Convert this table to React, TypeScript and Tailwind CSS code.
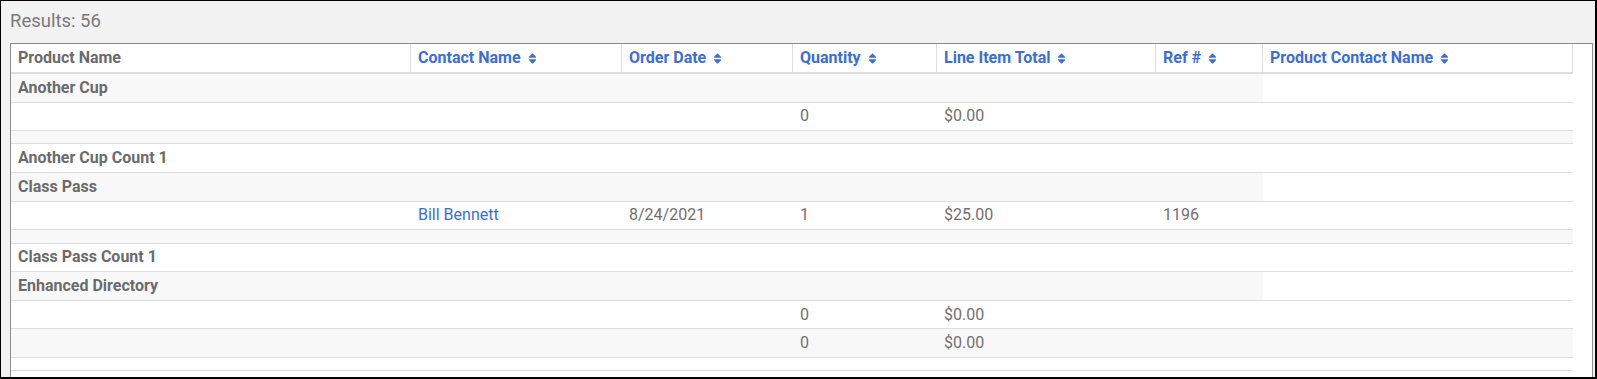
import { FaSort } from "react-icons/fa";

type Col = { label: string; width: string; sortable: boolean };

const columns: Col[] = [
  { label: "Product Name", width: "w-[400px]", sortable: false },
  { label: "Contact Name", width: "w-[211px]", sortable: true },
  { label: "Order Date", width: "w-[171px]", sortable: true },
  { label: "Quantity", width: "w-[144px]", sortable: true },
  { label: "Line Item Total", width: "w-[219px]", sortable: true },
  { label: "Ref #", width: "w-[107px]", sortable: true },
  { label: "Product Contact Name", width: "w-[310px]", sortable: true },
];

type Row =
  | { kind: "group"; label: string }
  | { kind: "count"; label: string }
  | { kind: "gap"; shaded: boolean }
  | {
      kind: "item";
      shaded: boolean;
      contact?: string;
      date?: string;
      qty: string;
      total: string;
      ref?: string;
    };

const rows: Row[] = [
  { kind: "group", label: "Another Cup" },
  { kind: "item", shaded: false, qty: "0", total: "$0.00" },
  { kind: "gap", shaded: true },
  { kind: "count", label: "Another Cup Count 1" },
  { kind: "group", label: "Class Pass" },
  {
    kind: "item",
    shaded: false,
    contact: "Bill Bennett",
    date: "8/24/2021",
    qty: "1",
    total: "$25.00",
    ref: "1196",
  },
  { kind: "gap", shaded: true },
  { kind: "count", label: "Class Pass Count 1" },
  { kind: "group", label: "Enhanced Directory" },
  { kind: "item", shaded: false, qty: "0", total: "$0.00" },
  { kind: "item", shaded: true, qty: "0", total: "$0.00" },
  { kind: "gap", shaded: false },
  { kind: "count", label: "" },
];

const cell = "h-[28.6px] border-b border-[#dedede] pl-[7px] pr-[6px] py-0 align-middle";

function ReportRow({ row }: { row: Row }) {
  if (row.kind === "group") {
    return (
      <tr>
        <td colSpan={6} className={`${cell} bg-[#f8f8f8] font-bold text-[#6b6b6b]`}>
          {row.label}
        </td>
        <td className={`${cell} bg-white`} />
      </tr>
    );
  }
  if (row.kind === "count") {
    return (
      <tr>
        <td colSpan={7} className={`${cell} bg-white font-bold text-[#6b6b6b]`}>
          {row.label}
        </td>
      </tr>
    );
  }
  if (row.kind === "gap") {
    return (
      <tr>
        <td
          colSpan={7}
          className={`h-[13.3px] border-b border-[#dedede] p-0 ${
            row.shaded ? "bg-[#f8f8f8]" : "bg-white"
          }`}
        />
      </tr>
    );
  }
  const bg = row.shaded ? "bg-[#f8f8f8]" : "bg-white";
  return (
    <tr className="text-[#707070]">
      <td className={`${cell} ${bg}`} />
      <td className={`${cell} ${bg} text-[#3b6ed6]`}>{row.contact}</td>
      <td className={`${cell} ${bg}`}>{row.date}</td>
      <td className={`${cell} ${bg}`}>{row.qty}</td>
      <td className={`${cell} ${bg}`}>{row.total}</td>
      <td className={`${cell} ${bg}`}>{row.ref}</td>
      <td className={`${cell} ${bg}`} />
    </tr>
  );
}

export default function App() {
  return (
    <div className="w-[1597px] h-[379px] overflow-hidden border-t border-l border-r-2 border-b-2 border-black bg-[#f2f2f2] pl-[9px] pr-[2px] font-['Roboto',sans-serif]">
      <div className="h-[42px] pt-[10px] text-[18.5px] leading-[21px] text-[#7a7a7a]">
        Results: 56
      </div>

      {/* Report panel */}
      <div className="h-[400px] border border-[#8c8c8c] bg-white">
        <table className="w-[1562px] table-fixed border-separate border-spacing-0 text-[16px]">
          <colgroup>
            {columns.map((c) => (
              <col key={c.label} className={c.width} />
            ))}
          </colgroup>
          <thead>
            <tr>
              {columns.map((c) => (
                <th
                  key={c.label}
                  className={`h-[30px] border-b-2 border-r border-[#dedede] pl-[7px] pr-[6px] py-0 text-left align-middle font-bold ${
                    c.sortable ? "text-[#3b6ed6]" : "text-[#6b6b6b]"
                  }`}
                >
                  <span className="inline-flex items-center gap-[5px]">
                    {c.label}
                    {c.sortable && <FaSort className="text-[13px]" />}
                  </span>
                </th>
              ))}
            </tr>
          </thead>
          <tbody>
            {rows.map((r, i) => (
              <ReportRow key={i} row={r} />
            ))}
          </tbody>
        </table>
      </div>
    </div>
  );
}
